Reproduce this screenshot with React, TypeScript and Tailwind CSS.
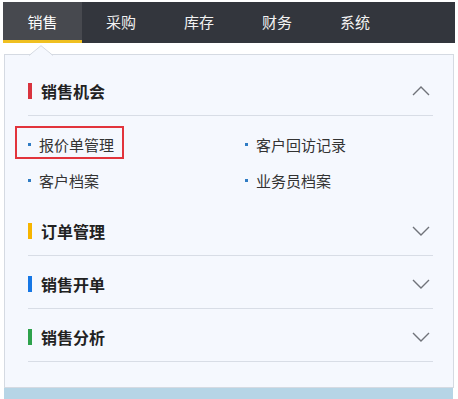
import React from "react";

const tabs = ["销售", "采购", "库存", "财务", "系统"];

function Chevron({ up }: { up?: boolean }) {
  return (
    <svg width="18" height="10" viewBox="0 0 18 10" className="mr-[3px]">
      <polyline
        points={up ? "1,9 9,1 17,9" : "1,1 9,9 17,1"}
        fill="none"
        stroke="#70737a"
        strokeWidth="1.4"
      />
    </svg>
  );
}

function Header({ title, color, up }: { title: string; color: string; up?: boolean }) {
  return (
    <div className="h-[53px] pt-[3px] flex items-center justify-between border-b border-[#d8dde6]">
      <div className="flex items-center">
        <span className="w-[4px] h-[16px] mr-[9px]" style={{ background: color }} />
        <span className="text-[16px] leading-none font-bold text-[#222]">{title}</span>
      </div>
      <Chevron up={up} />
    </div>
  );
}

function Item({ text, boxed }: { text: string; boxed?: boolean }) {
  return (
    <div className="relative h-[36px] flex items-center">
      {boxed && (
        <div className="absolute left-[-13px] top-0 w-[109px] h-[33px] border-2 border-[#e2343c]" />
      )}
      <span className="w-[3px] h-[3px] bg-[#2f7cc4] mr-[8px]" />
      <span className="text-[15px] leading-none text-[#333]">{text}</span>
    </div>
  );
}

export default function App() {
  return (
    <div className="w-[458px] h-[399px] bg-white relative overflow-hidden font-['Noto_Sans_CJK_SC',sans-serif]">
      <div className="mt-[2px] mx-[3px] h-[41px] bg-[#33363d] flex">
        {tabs.map((t, i) => (
          <div
            key={t}
            className={
              i === 0
                ? "w-[79px] bg-[#47494f] border-b-[3px] border-[#f0c020] flex items-center justify-center pt-[2px] text-[15px] text-white"
                : "w-[78px] flex items-center justify-center text-[15px] text-[#f2f2f2]"
            }
          >
            {t}
          </div>
        ))}
      </div>
      <div className="relative mt-[11px] ml-[4px] w-[450px] h-[334px] border border-[#d5dae2] bg-[#f5f8fe] px-[23px] pr-[20px] pt-[8px]">
        <svg
          width="24"
          height="11"
          viewBox="0 0 24 11"
          className="absolute top-[-10px] left-[24px]"
        >
          <polygon points="0,11 12,1 24,11" fill="#f5f8fe" />
          <polyline points="0,10.5 12,0.7 24,10.5" fill="none" stroke="#d5dae2" strokeWidth="1" />
        </svg>
        <Header title="销售机会" color="#d9343f" up />
        <div className="grid grid-cols-[217px_1fr] pt-[10px] pb-[5px]">
          <Item text="报价单管理" boxed />
          <Item text="客户回访记录" />
          <Item text="客户档案" />
          <Item text="业务员档案" />
        </div>
        <Header title="订单管理" color="#f7b500" />
        <Header title="销售开单" color="#1677e5" />
        <Header title="销售分析" color="#2ea24c" />
      </div>
      <div className="ml-[4px] w-[449px] h-[11px] bg-[#b6d5e6]" />
    </div>
  );
}
